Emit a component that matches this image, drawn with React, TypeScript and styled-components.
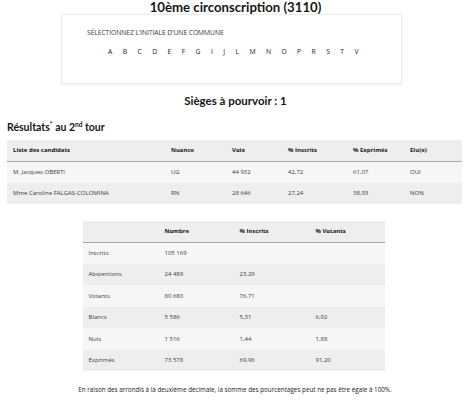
import React from "react";
import styled, { createGlobalStyle } from "styled-components";

const Global = createGlobalStyle`
  html, body { margin: 0; padding: 0; background: #fff; }
  body { font-family: "Open Sans", "DejaVu Sans", sans-serif; color: #161616; }
  * { box-sizing: border-box; }
`;

const Page = styled.div`
  width: 467px;
  height: 401px;
  overflow: hidden;
  padding: 0 5px 0 7px;
  display: flex;
  flex-direction: column;
  align-items: stretch;
`;

const Title = styled.h1`
  margin: 0;
  font-family: Lato, "Open Sans", sans-serif;
  font-size: 13.2px;
  line-height: 14px;
  font-weight: 700;
  text-align: center;
  padding-left: 2px;
`;

const SelectBox = styled.div`
  margin: 0 auto;
  width: 341px;
  height: 70px;
  border: 1px solid #ececec;
  box-shadow: 0 1px 2px rgba(0, 0, 0, 0.06);
  padding: 13px 0 0 25px;
  position: relative;
  left: -3px;
`;

const SelectLabel = styled.div`
  font-size: 6.8px;
  line-height: 10px;
  text-transform: uppercase;
  color: #3a3a3a;
  letter-spacing: -0.1px;
`;

const Letters = styled.div`
  display: flex;
  gap: 10.4px;
  margin-top: 9px;
  padding-left: 21px;
`;

const Letter = styled.span`
  font-size: 6.8px;
  line-height: 10px;
  color: #222;
`;

const Seats = styled.h2`
  margin: 9px 0 0;
  font-family: Lato, "Open Sans", sans-serif;
  font-size: 11.5px;
  line-height: 16px;
  font-weight: 700;
  text-align: center;
  padding-left: 2px;
`;

const ResultsTitle = styled.h3`
  margin: 11px 0 0;
  font-family: Lato, "Open Sans", sans-serif;
  font-size: 10.5px;
  line-height: 14px;
  font-weight: 700;
  sup {
    font-size: 6.5px;
    line-height: 0;
  }
`;

const Table = styled.table<{ $width: number }>`
  border-collapse: collapse;
  width: ${(p) => p.$width}px;
  table-layout: fixed;
  font-size: 6px;
  color: #3a3a3a;
`;

const T1 = styled(Table)`
  margin-top: 6px;
`;

const T2 = styled(Table)`
  margin: 17px auto 0;
  position: relative;
  left: -1px;
`;

const Head = styled.th<{ $w?: number }>`
  background: #eeeeee;
  text-align: left;
  font-weight: 700;
  color: #161616;
  height: 21px;
  padding: 0 0 0 6px;
  border-bottom: 1.5px solid #a9a9a9;
  width: ${(p) => (p.$w ? `${p.$w}px` : "auto")};
`;

const Row = styled.tr<{ $alt: boolean }>`
  background: ${(p) => (p.$alt ? "#eeeeee" : "#f6f6f6")};
`;

const Cell = styled.td`
  height: 21.5px;
  padding: 0 0 0 6px;
  text-align: left;
`;

const Note = styled.p`
  margin: 14px 0 0;
  font-size: 6.3px;
  line-height: 10px;
  text-align: center;
  color: #222;
  padding-left: 1px;
`;

const letters = "A B C D E F G I J L M N O P R S T V".split(" ");

const candidates = [
  ["M. Jacques OBERTI", "UG", "44 932", "42,72", "61,07", "OUI"],
  ["Mme Caroline FALGAS-COLOMINA", "RN", "28 646", "27,24", "38,93", "NON"],
];

const stats = [
  ["Inscrits", "105 169", "", ""],
  ["Abstentions", "24 489", "23,29", ""],
  ["Votants", "80 680", "76,71", ""],
  ["Blancs", "5 586", "5,31", "6,92"],
  ["Nuls", "1 516", "1,44", "1,88"],
  ["Exprimés", "73 578", "69,96", "91,20"],
];

export default function App() {
  return (
    <>
      <Global />
      <Page>
        <Title>10ème circonscription (3110)</Title>
        <SelectBox>
          <SelectLabel>Sélectionnez l'initiale d'une commune</SelectLabel>
          <Letters>
            {letters.map((l) => (
              <Letter key={l}>{l}</Letter>
            ))}
          </Letters>
        </SelectBox>
        <Seats>Sièges à pourvoir : 1</Seats>
        <ResultsTitle>
          Résultats<sup>*</sup> au 2<sup>nd</sup> tour
        </ResultsTitle>
        <T1 $width={455}>
          <thead>
            <tr>
              <Head $w={158}>Liste des candidats</Head>
              <Head $w={61}>Nuance</Head>
              <Head $w={56}>Voix</Head>
              <Head $w={65}>% Inscrits</Head>
              <Head $w={57}>% Exprimés</Head>
              <Head>Elu(e)</Head>
            </tr>
          </thead>
          <tbody>
            {candidates.map((r, i) => (
              <Row key={r[0]} $alt={i % 2 === 1}>
                {r.map((c, j) => (
                  <Cell key={j}>{c}</Cell>
                ))}
              </Row>
            ))}
          </tbody>
        </T1>
        <T2 $width={302}>
          <thead>
            <tr>
              <Head $w={76}></Head>
              <Head $w={75}>Nombre</Head>
              <Head $w={76}>% Inscrits</Head>
              <Head>% Votants</Head>
            </tr>
          </thead>
          <tbody>
            {stats.map((r, i) => (
              <Row key={r[0]} $alt={i % 2 === 1}>
                {r.map((c, j) => (
                  <Cell key={j}>{c}</Cell>
                ))}
              </Row>
            ))}
          </tbody>
        </T2>
        <Note>
          En raison des arrondis à la deuxième décimale, la somme des pourcentages peut ne pas être égale à 100%.
        </Note>
      </Page>
    </>
  );
}
